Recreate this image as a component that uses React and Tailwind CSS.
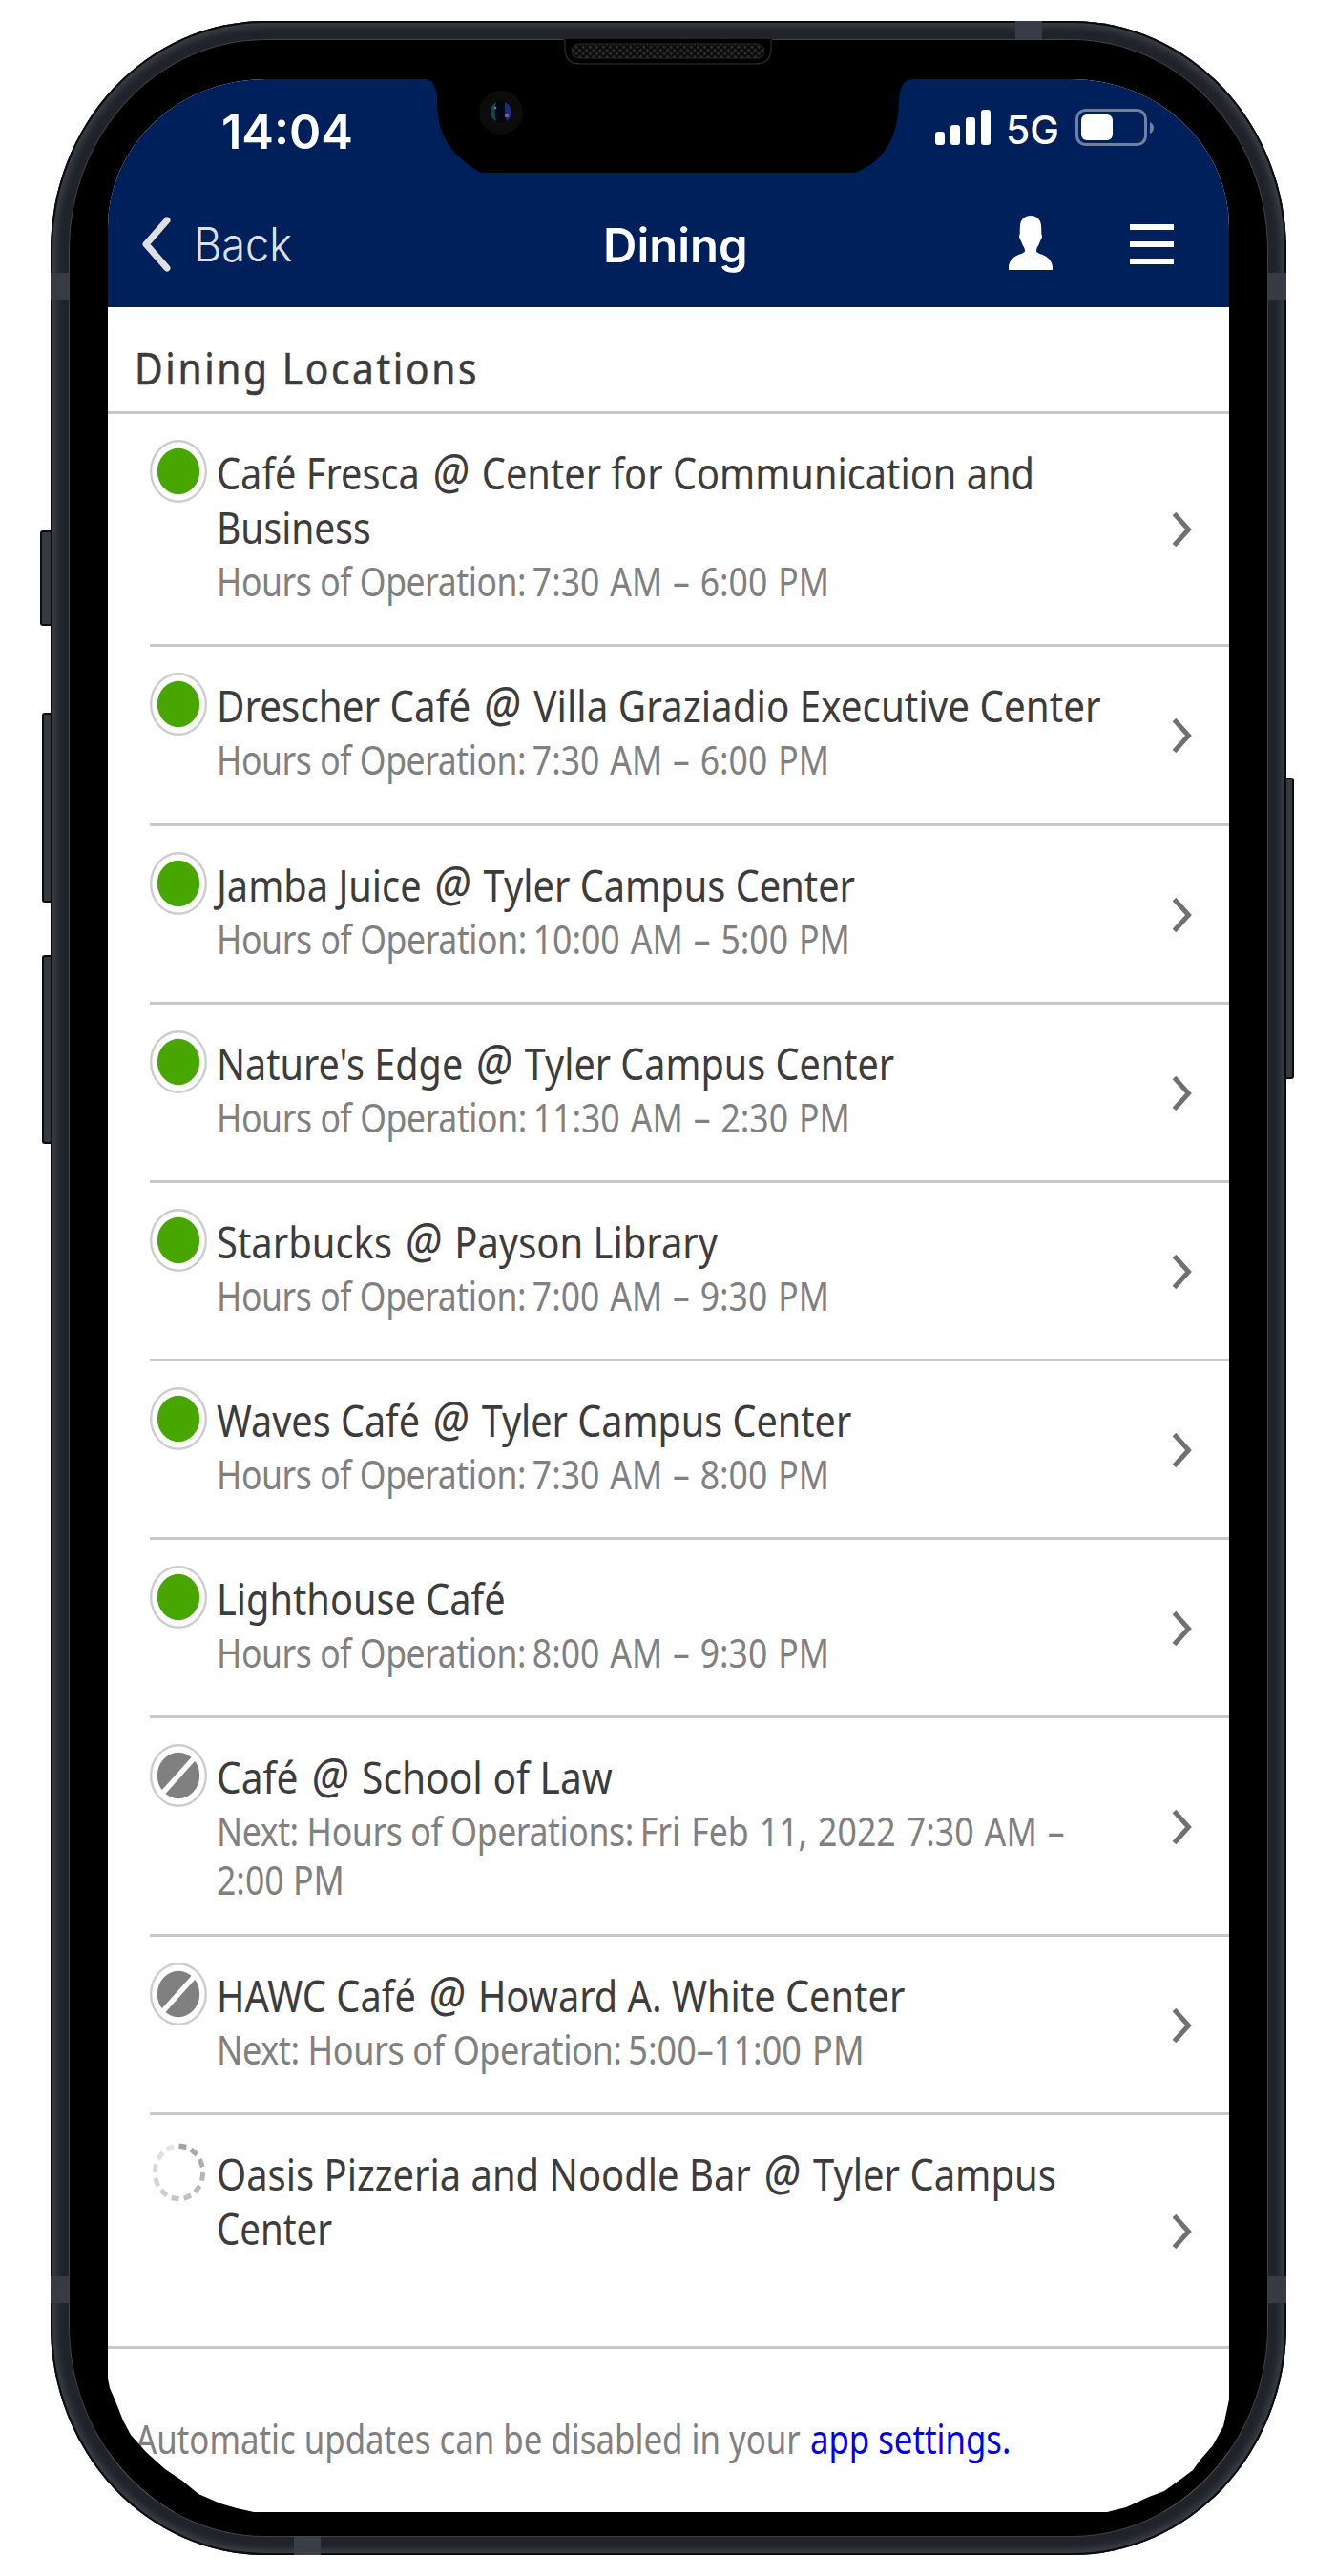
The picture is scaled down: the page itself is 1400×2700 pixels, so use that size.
import { useLayoutEffect, useRef, useState } from "react";

const locations = [
  {
    status: "open",
    title: [["Café Fresca @ Center for Communication and", 857], ["Business", 162]],
    hours: [["Hours of Operation: 7:30 AM – 6:00 PM", 642]],
    height: "h-[244px]",
  },
  {
    status: "open",
    title: [["Drescher Café @ Villa Graziadio Executive Center", 927]],
    hours: [["Hours of Operation: 7:30 AM – 6:00 PM", 642]],
    height: "h-[188px]",
  },
  {
    status: "open",
    title: [["Jamba Juice @ Tyler Campus Center", 669]],
    hours: [["Hours of Operation: 10:00 AM – 5:00 PM", 664]],
    height: "h-[187px]",
  },
  {
    status: "open",
    title: [["Nature's Edge @ Tyler Campus Center", 710]],
    hours: [["Hours of Operation: 11:30 AM – 2:30 PM", 664]],
    height: "h-[187px]",
  },
  {
    status: "open",
    title: [["Starbucks @ Payson Library", 525]],
    hours: [["Hours of Operation: 7:00 AM – 9:30 PM", 642]],
    height: "h-[187px]",
  },
  {
    status: "open",
    title: [["Waves Café @ Tyler Campus Center", 665]],
    hours: [["Hours of Operation: 7:30 AM – 8:00 PM", 642]],
    height: "h-[187px]",
  },
  {
    status: "open",
    title: [["Lighthouse Café", 303]],
    hours: [["Hours of Operation: 8:00 AM – 9:30 PM", 642]],
    height: "h-[187px]",
  },
  {
    status: "closed",
    title: [["Café @ School of Law", 415]],
    hours: [["Next: Hours of Operations: Fri Feb 11, 2022 7:30 AM –", 889], ["2:00 PM", 134]],
    height: "h-[229px]",
  },
  {
    status: "closed",
    title: [["HAWC Café @ Howard A. White Center", 721]],
    hours: [["Next: Hours of Operation: 5:00–11:00 PM", 679]],
    height: "h-[187px]",
  },
  {
    status: "loading",
    title: [["Oasis Pizzeria and Noodle Bar @ Tyler Campus", 880], ["Center", 121]],
    hours: [],
    height: "h-[242px]",
  },
];

// one line of text, condensed or widened to the given width
const FitText = ({ width, className = "", children }) => {
  const ref = useRef(null);
  const [scale, setScale] = useState(1);

  useLayoutEffect(() => {
    setScale(width / ref.current.offsetWidth);
  }, [width]);

  return (
    <div className={className} style={{ width }}>
      <span
        ref={ref}
        className="inline-block origin-left whitespace-nowrap"
        style={{ transform: `scaleX(${scale})` }}
      >
        {children}
      </span>
    </div>
  );
};

const PlaceName = ({ text }) => {
  const [name, place] = text.split("@");
  if (place === undefined) return text;

  return (
    <>
      {name}
      <span className="px-[4px] text-[51px] leading-none italic">@</span>
      {place}
    </>
  );
};

// the label is set tight, the times a little wider
const Hours = ({ text }) => {
  const at = text.lastIndexOf(": ");
  if (at < 0) return text;

  return (
    <>
      <span className="tracking-[-0.5px]">{text.slice(0, at + 1)}</span>
      <span className="[word-spacing:-3px]"> </span>
      <span className="[word-spacing:2px]">{text.slice(at + 2)}</span>
    </>
  );
};

const StatusIcon = ({ status }) => {
  if (status === "loading") {
    const dashes = Array.from({ length: 12 });
    return (
      <svg className="h-[66px] w-[60px]" viewBox="0 0 60 66">
        <g transform="translate(30.500 33) scale(1 1.1)">
          {dashes.map((_, i) => (
            <rect
              key={i}
              x="-4"
              y="-27.500"
              width="8"
              height="5"
              fill="#a3a3a3"
              opacity={1 - i * 0.065}
              transform={`rotate(${9 + i * 30})`}
            />
          ))}
        </g>
      </svg>
    );
  }

  return (
    <svg className="h-[66px] w-[60px]" viewBox="0 0 60 66">
      <ellipse cx="30" cy="33" rx="28.8" ry="31.8" fill="#fff" stroke="#cdcdcd" strokeWidth="2.400" />
      <ellipse cx="30" cy="33" rx="22.2" ry="24.2" fill={status === "open" ? "#48a600" : "#808080"} />
      {status === "closed" && <path d="M12 53 48 13" stroke="#fff" strokeWidth="5.5" />}
    </svg>
  );
};

const LocationRow = ({ location, last }) => (
  <li
    className={`ml-11 flex border-[#c8c8c8] ${location.height} ${last ? "" : "border-b-[3px]"}`}
  >
    <div className="w-[70px] shrink-0 pt-[27px]">
      <StatusIcon status={location.status} />
    </div>
    <div className="grow pt-[33px]">
      {location.title.map(([text, width]) => (
        <FitText key={text} width={width} className="h-[57px] text-[46px] leading-[57px] text-[#3c3c3c]">
          <PlaceName text={text} />
        </FitText>
      ))}
      <div className="mt-[2px]">
        {location.hours.map(([text, width]) => (
          <FitText key={text} width={width} className="text-[42px] leading-[51px] text-[#808080]">
            <Hours text={text} />
          </FitText>
        ))}
      </div>
    </div>
    <svg className="mt-px mr-[37px] h-[40px] w-6 self-center" viewBox="0 0 24 40" fill="none">
      <path d="M3.5 3.5 18.500 20 3.500 36.500" stroke="#707070" strokeWidth="5" />
    </svg>
  </li>
);

const StatusBar = () => (
  <div className="flex h-[98px] items-start justify-between pr-[79px] pl-[119px] font-['Inter',sans-serif] text-white">
    <FitText width={138} className="mt-[26px] text-[49px] leading-[60px] font-semibold">
      14:04
    </FitText>
    <div className="mt-[30px] flex h-[42px] items-center">
      <svg className="h-[38px] w-[58px]" viewBox="0 0 58 38" fill="#fff">
        <rect x="0" y="23" width="10" height="14" rx="3" />
        <rect x="16" y="16" width="10" height="21" rx="3" />
        <rect x="32" y="8" width="10" height="29" rx="3" />
        <rect x="48" y="0" width="10" height="37" rx="3" />
      </svg>
      <FitText width={56} className="mt-[3px] mr-[17px] ml-4 text-[41px] leading-[42px] font-medium">
        5G
      </FitText>
      <svg className="h-[40px] w-[82px]" viewBox="0 0 82 40">
        <rect x="1.500" y="1.500" width="72" height="36" rx="9" fill="none" stroke="#71809f" strokeWidth="3" />
        <rect x="6" y="6" width="33" height="27" rx="6" fill="#fff" />
        <path d="M78 14q4 2 4 6t-4 6z" fill="#71809f" />
      </svg>
    </div>
  </div>
);

const NavBar = () => (
  <div className="flex h-[141px] pt-[45px] pr-[58px] pl-[35px] font-['Inter',sans-serif] text-white">
    <svg className="h-[60px] w-8" viewBox="0 0 32 60" fill="none">
      <path d="M27 5 5 30 27 55" stroke="#dfdfdf" strokeWidth="7" strokeLinecap="round" strokeLinejoin="round" />
    </svg>
    <FitText width={103} className="ml-[23px] text-[49px] leading-[62px] text-[#dde0e8] [font-weight:350]">
      Back
    </FitText>
    <FitText width={152} className="ml-[326px] text-[49px] leading-[64px] font-semibold">
      Dining
    </FitText>
    <svg className="ml-auto h-[58px] w-[46px]" viewBox="0 0 46 58" fill="#fff">
      <path d="M23 0C29 0 34 4 34 11C34.500 15 34 17 34.500 20C36 23 33.500 25 32.500 28C31.500 32 29 33 29 37C29 41 45 40 46 54V57H0V54C1 40 17 41 17 37C17 33 14.500 32 13.500 28C12.500 25 10 23 11.500 20C12 17 11.500 15 12 11C12 4 17 0 23 0Z" />
    </svg>
    <div className="mt-[9px] ml-[81px] flex w-[46px] flex-col gap-3">
      <div className="h-[6px] bg-white" />
      <div className="h-[6px] bg-white" />
      <div className="h-[6px] bg-white" />
    </div>
  </div>
);

const Earpiece = () => (
  <svg className="absolute top-[18px] left-[537px] h-[30px] w-[220px]" viewBox="0 0 220 30">
    <defs>
      <pattern id="mesh" width="5" height="5" patternUnits="userSpaceOnUse" patternTransform="rotate(45)">
        <rect width="5" height="5" fill="#0b0b0b" />
        <rect width="3" height="3" fill="#2b2b2b" />
      </pattern>
    </defs>
    <path d="M0 1Q2 1 2 5V12Q3 27 18 27H202Q217 27 218 12V5Q218 1 220 1" fill="#000" stroke="#262626" strokeWidth="1.500" />
    <rect x="9" y="6" width="202" height="15" rx="7.500" fill="url(#mesh)" stroke="#292929" />
  </svg>
);

const Notch = () => (
  <svg className="absolute top-0 left-[325px] h-[99px] w-[525px]" viewBox="0 0 525 99">
    <path d="M0 0H6Q18 0 20 18C20 40 20 72 66 98H458C490 86 503 58 504 25Q504 0 519 0H525Z" fill="#000" />
    <circle cx="87" cy="35" r="23" fill="#0c0c0c" />
    <ellipse cx="87" cy="34" rx="12" ry="11.500" fill="#030712" />
    <path d="M82 24Q75 28 76 36Q77 42 82 44Q79 34 82 24Z" fill="#174646" />
    <path d="M91 24Q98 27 98 35Q97 42 93 44Q90 34 91 24Z" fill="#1b2a80" />
    <circle cx="93" cy="38" r="2.200" fill="#6a65a8" />
    <circle cx="81" cy="30" r="1.300" fill="#4f8a89" />
  </svg>
);

// dark bezel reaching over the bottom edge of the page
const BottomCorners = () => (
  <>
    <svg className="absolute bottom-0 left-0 h-[140px] w-[154px]" viewBox="0 0 154 140">
      <path d="M0 0 2 10 8.500 25 16 44 24 59 40 77 60 95 78 107 95 121 118 131 135 136 153 140H0Z" />
    </svg>
    <svg className="absolute right-0 bottom-0 h-[118px] w-[128px]" viewBox="0 0 128 118">
      <path d="M128 0 122 28 111 48 98 63 90 74 78 83 60 96 44 102 20 113 0 118H128Z" />
    </svg>
  </>
);

const PhoneFrame = ({ children }) => (
  <div className="relative ml-[53px] h-[2656px] w-[1295px] rounded-[225px/240px] bg-[#20242a] p-[19px] shadow-[inset_0_0_0_2px_#090c10,inset_0_0_7px_6px_#3c4147]">
    <div className="absolute top-[534px] -left-[11px] h-[100px] w-[11px] rounded-l-[3px] border-2 border-r-0 border-[#090c11] bg-[#363a40]" />
    <div className="absolute top-[725px] -left-[9px] h-[199px] w-[9px] rounded-l-[3px] border-2 border-r-0 border-[#090c11] bg-[#363a40]" />
    <div className="absolute top-[979px] -left-[9px] h-[198px] w-[9px] rounded-l-[3px] border-2 border-r-0 border-[#090c11] bg-[#363a40]" />
    <div className="absolute top-[793px] -right-[8px] h-[316px] w-[8px] rounded-r-[3px] border-2 border-l-0 border-[#090c11] bg-[#363a3b]" />
    <div className="absolute top-[264px] left-0 h-[28px] w-[19px] bg-[#383a45]" />
    <div className="absolute top-[264px] right-0 h-[28px] w-[19px] bg-[#383a45]" />
    <div className="absolute top-[2364px] left-0 h-[28px] w-[19px] bg-[#383a45]" />
    <div className="absolute top-[2364px] right-0 h-[28px] w-[19px] bg-[#383a45]" />
    <div className="absolute top-0 left-[1011px] h-[19px] w-[28px] bg-[#3a3b49]" />
    <div className="absolute bottom-0 left-[255px] h-[19px] w-[28px] bg-[#3a3e47]" />
    <div className="h-full overflow-hidden rounded-[206px/221px] border border-[#404244] bg-black pt-[41px] pl-[40px]">
      {children}
    </div>
    <Earpiece />
  </div>
);

const App = () => (
  <div className="h-[2700px] w-[1400px] overflow-hidden bg-white pt-[22px] font-['Noto_Sans',sans-serif]">
    <PhoneFrame>
      <div className="relative h-[2550px] w-[1175px] overflow-hidden rounded-t-[165px_155px] bg-white">
        <header className="bg-[#00205c]">
          <StatusBar />
          <NavBar />
        </header>
        <h1 className="h-[112px] border-b-[3px] border-[#c8c8c8] pt-[35px] pl-7">
          <FitText width={361} className="text-[46px] leading-[57px] tracking-[3px] text-[#3c3c3c] [-webkit-text-stroke:0.6px_#3c3c3c]">
            Dining Locations
          </FitText>
        </h1>
        <ul>
          {locations.map((location, i) => (
            <LocationRow key={location.title[0][0]} location={location} last={i === locations.length - 1} />
          ))}
        </ul>
        <footer className="flex border-t-[3px] border-[#c8c8c8] pt-[68px] pl-[29px] text-[42px] leading-[51px]">
          <FitText width={697} className="mr-[10px] text-[#808080]">
            Automatic updates can be disabled in your
          </FitText>
          <FitText width={210} className="text-[#0000ee]">
            <a href="#settings">app settings.</a>
          </FitText>
        </footer>
        <Notch />
        <BottomCorners />
      </div>
    </PhoneFrame>
  </div>
);

export default App;
